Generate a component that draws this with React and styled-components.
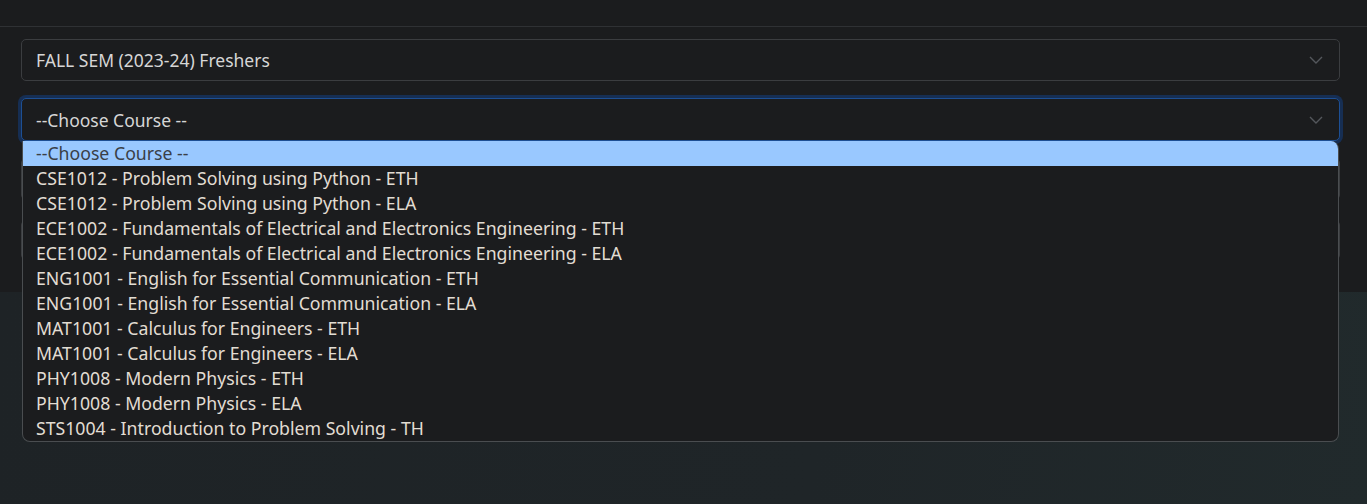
import styled, { createGlobalStyle } from 'styled-components';

const GlobalStyle = createGlobalStyle`
  body {
    margin: 0;
    background: #1b1c1e;
    font-family: "Noto Sans", "Open Sans", sans-serif;
    color: #dcdcdc;
  }
`

const Page = styled.div`
  height: 504px;
  overflow: hidden;
  background: #1b1c1e;
`

const TopBar = styled.div`
  height: 26px;
  border-bottom: 1px solid #2f3134;
`

const Content = styled.div`
  padding: 12px 27px 0 21px;
  display: flex;
  flex-direction: column;
  gap: 17px;
`

const Field = styled.div`
  position: relative;
`

const SelectBox = styled.div`
  box-sizing: border-box;
  height: ${props => props.focused ? '43px' : '42px'};
  display: flex;
  align-items: center;
  justify-content: space-between;
  padding: 0 16px 0 14px;
  border: 1px solid ${props => props.focused ? '#1d4f94' : '#3b3d40'};
  border-radius: 5px;
  box-shadow: ${props => props.focused ? '0 0 0 3px rgba(18, 62, 128, 0.55)' : 'none'};
  font-size: 17.5px;
  color: #d6d6d6;
  background: #1b1c1e;
`

const Chevron = () => (
  <svg width="14" height="8" viewBox="0 0 14 8" fill="none">
    <polyline points="1,1 7,7 13,1" stroke="#54575c" strokeWidth="1.4" />
  </svg>
)

const DropList = styled.ul`
  position: absolute;
  top: 100%;
  left: 1px;
  right: 1px;
  margin: 0;
  padding: 0;
  list-style: none;
  background: #1b1c1e;
  border: 1px solid #4a4d50;
  border-top: none;
  border-radius: 0 8px 8px 8px;
  overflow: hidden;
  z-index: 5;
`

const Option = styled.li`
  height: 25px;
  line-height: 25px;
  padding-left: 13px;
  font-size: 17.7px;
  color: ${props => props.active ? '#3a3f47' : '#e2ddd3'};
  background: ${props => props.active ? '#99c8ff' : 'transparent'};
  white-space: nowrap;
`

const HiddenForm = styled.div`
  display: flex;
  flex-direction: column;
  gap: 20px;
`

const GhostBox = styled.div`
  height: ${props => props.h}px;
  border: 1px solid #3b3d40;
  border-radius: 5px;
`

const Lower = styled.div`
  margin-top: 32px;
  height: 220px;
  background: linear-gradient(100deg, #1e2326 0%, #1f2528 60%, #212a2c 100%);
`

const courses = [
  'CSE1012 - Problem Solving using Python - ETH',
  'CSE1012 - Problem Solving using Python - ELA',
  'ECE1002 - Fundamentals of Electrical and Electronics Engineering - ETH',
  'ECE1002 - Fundamentals of Electrical and Electronics Engineering - ELA',
  'ENG1001 - English for Essential Communication - ETH',
  'ENG1001 - English for Essential Communication - ELA',
  'MAT1001 - Calculus for Engineers - ETH',
  'MAT1001 - Calculus for Engineers - ELA',
  'PHY1008 - Modern Physics - ETH',
  'PHY1008 - Modern Physics - ELA',
  'STS1004 - Introduction to Problem Solving - TH',
]

export default function App() {
  return (
    <Page>
      <GlobalStyle />
      <TopBar />
      <Content>
        <Field>
          <SelectBox>
            <span>FALL SEM (2023-24) Freshers</span>
            <Chevron />
          </SelectBox>
        </Field>
        <Field>
          <SelectBox focused>
            <span>--Choose Course --</span>
            <Chevron />
          </SelectBox>
          <DropList>
            <Option active>--Choose Course --</Option>
            {courses.map((c, i) => (
              <Option key={i}>{c}</Option>
            ))}
          </DropList>
        </Field>
        <HiddenForm>
          <GhostBox h={40} />
          <GhostBox h={38} />
        </HiddenForm>
      </Content>
      <Lower />
    </Page>
  )
}
